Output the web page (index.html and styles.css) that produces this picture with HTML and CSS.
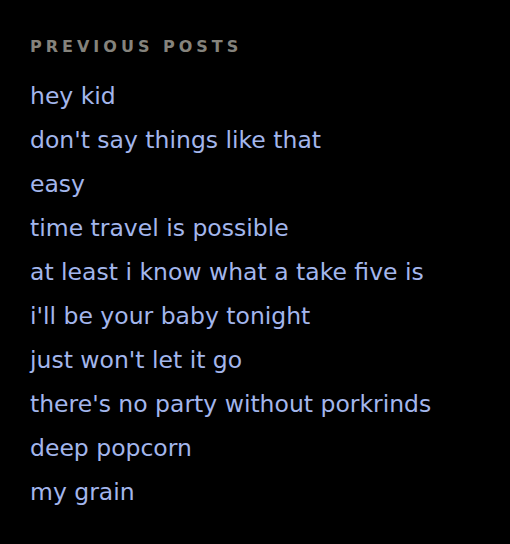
FILE: index.html
```html
<!DOCTYPE html>
<html>
<head>
<meta charset="utf-8">
<link rel="stylesheet" href="styles.css">
</head>
<body>
<div class="sidebar">
  <h2 class="title">Previous Posts</h2>
  <ul class="posts">
    <li><a href="#">hey kid</a></li>
    <li><a href="#">don't say things like that</a></li>
    <li><a href="#">easy</a></li>
    <li><a href="#">time travel is possible</a></li>
    <li><a href="#">at least i know what a take five is</a></li>
    <li><a href="#">i'll be your baby tonight</a></li>
    <li><a href="#">just won't let it go</a></li>
    <li><a href="#">there's no party without porkrinds</a></li>
    <li><a href="#">deep popcorn</a></li>
    <li><a href="#">my grain</a></li>
  </ul>
</div>
</body>
</html>
```
FILE: styles.css
```css
html, body {
  margin: 0;
  padding: 0;
  background: #000;
  height: 100%;
}
.sidebar {
  padding: 36px 0 0 30px;
  font-family: "DejaVu Sans", sans-serif;
}
.title {
  margin: 0 0 16px 0;
  font-size: 16px;
  font-weight: bold;
  text-transform: uppercase;
  letter-spacing: 4px;
  color: #85837c;
  line-height: 22px;
}
.posts {
  list-style: none;
  margin: 0;
  padding: 0;
}
.posts li {
  line-height: 44px;
  height: 44px;
}
.posts a {
  color: #a3b6ec;
  text-decoration: none;
  font-size: 23.5px;
}
```
